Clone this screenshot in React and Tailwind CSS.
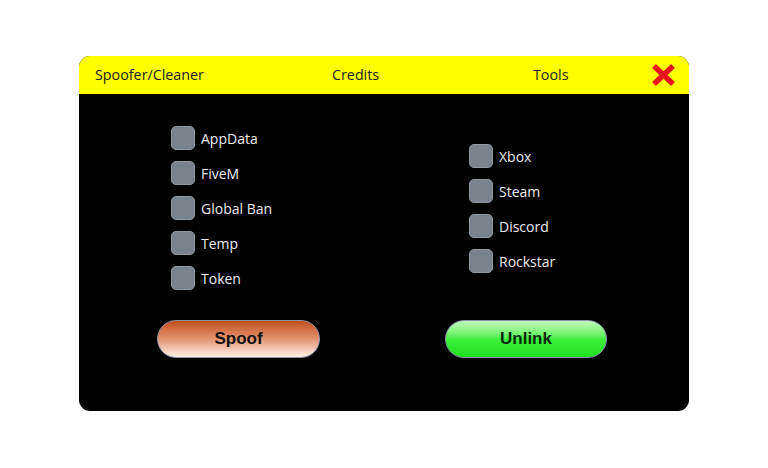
import { useState } from 'react';

const UI = { fontFamily: "'Open Sans', 'Noto Sans', sans-serif" };
const BTN = { fontFamily: "'Liberation Sans', Arial, sans-serif" };

const LEFT = ['AppData', 'FiveM', 'Global Ban', 'Temp', 'Token'];
const RIGHT = ['Xbox', 'Steam', 'Discord', 'Rockstar'];

const Check = ({ label }) => {
  const [on, setOn] = useState(false);
  return (
    <label className="flex items-center gap-[6px] h-[24px] cursor-pointer" onClick={() => setOn(!on)}>
      <span className="w-[24px] h-[24px] rounded-[5px] bg-[#7a828c] border border-[#8f979f] flex items-center justify-center">
        {on && <span className="w-[10px] h-[10px] rounded-sm bg-white" />}
      </span>
      <span className="text-[14px] text-[#ececec]" style={UI}>{label}</span>
    </label>
  );
};

export default function App() {
  return (
    <div className="w-[768px] h-[468px] bg-white pt-[56px] pl-[79px]">
      <div className="w-[610px] h-[355px] bg-black rounded-[11px] overflow-hidden flex flex-col">
        {/* header */}
        <div className="h-[38px] bg-[#ffff00] flex items-center pl-[16px] text-[14.3px] text-[#222]" style={UI}>
          <span className="w-[237px]">Spoofer/Cleaner</span>
          <span className="w-[201px]">Credits</span>
          <span>Tools</span>
          <svg className="ml-auto mr-[12px]" width="27" height="26" viewBox="0 0 27 26">
            <path d="M4 4 L23 22 M23 4 L4 22" stroke="#e8141c" strokeWidth="5.5" strokeLinecap="butt" />
          </svg>
        </div>

        {/* body */}
        <div className="flex flex-col pl-[78px] pt-[32px]">
          <div className="flex items-start">
            <div className="w-[288px] pl-[14px] flex flex-col gap-[11px]">
              {LEFT.map(l => <Check key={l} label={l} />)}
            </div>
            <div className="pl-[24px] pt-[18px] flex flex-col gap-[11px]">
              {RIGHT.map(l => <Check key={l} label={l} />)}
            </div>
          </div>
          <div className="flex mt-[30px]">
            <button
              className="w-[163px] h-[38px] rounded-full border border-[#8c93ad] bg-gradient-to-b from-[#c24d18] via-[#e39470] to-[#fdf0ea] text-[17px] font-bold text-[#111]"
              style={BTN}
            >
              Spoof
            </button>
            <button
              className="ml-[125px] w-[162px] h-[38px] rounded-full border border-[#8c93ad] bg-gradient-to-b from-[#c2f8bc] via-[#3df03d] to-[#1ee01e] text-[17px] font-bold text-[#0c2a0c]"
              style={BTN}
            >
              Unlink
            </button>
          </div>
        </div>
      </div>
    </div>
  );
}
